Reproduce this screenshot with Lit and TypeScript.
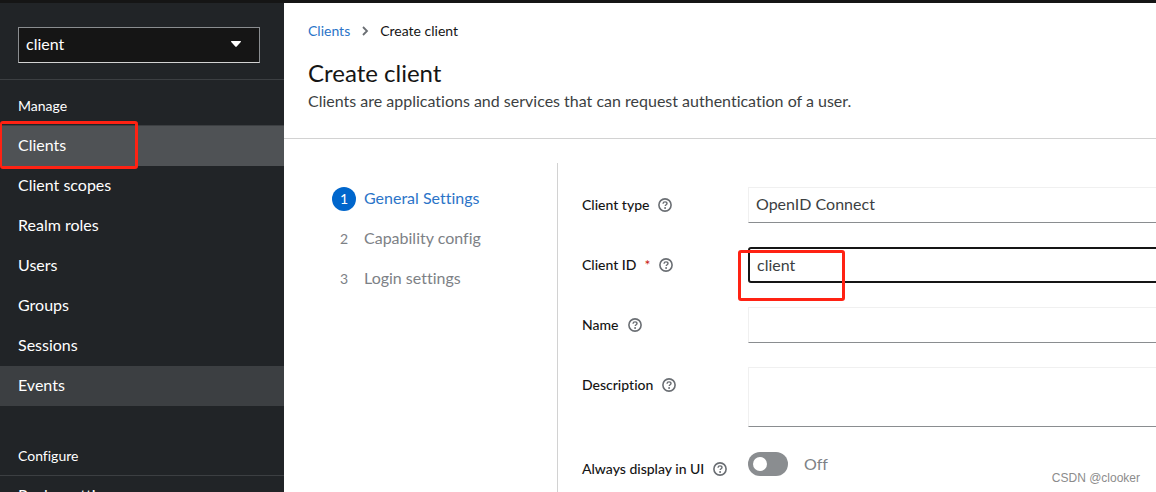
import { LitElement, html, css, svg, nothing } from "lit";
import { customElement, property } from "lit/decorators.js";

const helpIcon = svg`
  <circle cx="7" cy="7" r="6.1" fill="none" stroke="currentColor" stroke-width="1.6"></circle>
  <path d="M5 5.7C5.1 4.6 5.9 3.9 7 3.9s2 .7 2 1.6c0 1.3-1.8 1.3-1.8 2.6" fill="none" stroke="currentColor" stroke-width="1.4"></path>
  <circle cx="7.1" cy="10" r="0.95" fill="currentColor"></circle>`;

@customElement("side-nav")
class SideNav extends LitElement {
  static styles = css`
    :host { display: block; background: #212427; color: #fff; }
    .realm { padding: 24px 24px 16px 18px; border-bottom: 1px solid #3c3f42; }
    .selector {
      display: flex; align-items: center; justify-content: space-between;
      box-sizing: border-box; width: 100%; height: 36px; padding: 0 18px 2px 7px;
      border: 1px solid #8a8d90; border-bottom-color: #d2d2d2; border-radius: 0;
      background: #151515; color: #fff; font: inherit;
    }
    .group { margin-bottom: 24px; }
    .title {
      margin: 0; padding: 15px 18px 9px; border-bottom: 1px solid #3c3f42;
      font-size: 14px; line-height: 21px; font-weight: 400;
    }
    .list { list-style: none; margin: 0; padding: 0; }
    .item { position: relative; }
    .link { display: block; padding: 7px 18px 9px; line-height: 24px; color: #fff; text-decoration: none; }
    .current { background: #4f5255; }
    .hover { background: #3c3f42; }
    .mark {
      position: absolute; left: 0; top: -5px; width: 138px; height: 48px;
      box-sizing: border-box; border: 3px solid #ff2213; border-left-width: 2px; border-radius: 3px; pointer-events: none;
    }
  `;

  private item(label: string, state = "") {
    return html`<li class="item">
      <a class="link ${state}" href="#" aria-current=${state === "current" ? "page" : nothing}>${label}</a>
      ${state === "current" ? html`<span class="mark"></span>` : nothing}
    </li>`;
  }

  render() {
    return html`
      <div class="realm">
        <button class="selector" type="button" aria-haspopup="listbox">
          <span>client</span>
          <svg width="10" height="6" viewBox="0 0 10 6" aria-hidden="true"><path d="M.6 0h8.8c.6 0 .8.7.4 1.1L5.7 5.6a1 1 0 0 1-1.4 0L.2 1.1C-.2.7 0 0 .6 0z" fill="#fff"></path></svg>
        </button>
      </div>
      <nav>
        <section class="group">
          <h2 class="title">Manage</h2>
          <ul class="list">
            ${this.item("Clients", "current")}
            ${["Client scopes", "Realm roles", "Users", "Groups", "Sessions"].map((l) => this.item(l))}
            ${this.item("Events", "hover")}
          </ul>
        </section>
        <section class="group">
          <h2 class="title">Configure</h2>
          <ul class="list">${this.item("Realm settings")}</ul>
        </section>
      </nav>`;
  }
}

@customElement("form-row")
class FormRow extends LitElement {
  @property() label = "";
  @property() field = "";
  @property() kind = "text";
  @property() value = "";
  @property({ type: Boolean }) required = false;
  @property({ type: Boolean }) active = false;

  static styles = css`
    :host { display: grid; grid-template-columns: 166px minmax(0, 1fr); align-items: start; }
    .head { display: flex; align-items: center; padding-top: 7px; font-size: 14px; line-height: 22px; font-weight: 500; white-space: nowrap; }
    .star { margin-left: 8px; color: #c9190b; font-weight: 400; }
    .help { display: flex; margin-left: 9px; padding: 0; border: 0; background: none; color: #6a6e73; }
    .body { position: relative; display: flex; align-items: center; }
    .toggle { padding-top: 1px; }
    .control {
      display: block; box-sizing: border-box; width: 100%; height: 36px; margin: 0; padding: 0 8px 2px;
      border: 1px solid #f0f0f0; border-bottom-color: #8a8d90; border-radius: 0; outline: none;
      background: #fff; color: #3c3f42; font: inherit; appearance: none; resize: none;
    }
    select.control { padding: 0 7px 2px; }
    .tall { height: 60px; }
    .active { border: 2px solid #151515; border-radius: 3px; padding: 0 7px 2px; }
    .mark {
      position: absolute; left: -10px; top: 3px; width: 107px; height: 51px; box-sizing: border-box;
      border: 3px solid #ff2213; border-radius: 3px; pointer-events: none;
    }
    .switch {
      appearance: none; display: flex; align-items: center; box-sizing: border-box;
      width: 40px; height: 24px; margin: 0; padding: 0 5px; border-radius: 12px; background: #8a8d90;
    }
    .switch::before { content: ""; width: 14px; height: 14px; border-radius: 50%; background: #fff; }
    .switch:checked { background: #06c; justify-content: flex-end; }
    .state { margin-left: 16px; line-height: 24px; color: #7d8186; }
  `;

  private control() {
    switch (this.kind) {
      case "select":
        return html`<select id=${this.field} class="control"><option>${this.value}</option></select>`;
      case "area":
        return html`<textarea id=${this.field} class="control tall"></textarea>`;
      case "switch":
        return html`<input id=${this.field} class="switch" type="checkbox" role="switch"><span class="state">Off</span>`;
      default:
        return html`<input id=${this.field} class="control ${this.active ? "active" : ""}" type="text" .value=${this.value}>`;
    }
  }

  render() {
    return html`
      <div class="head">
        <label for=${this.field}>${this.label}</label>
        ${this.required ? html`<span class="star" aria-hidden="true">*</span>` : nothing}
        <button class="help" type="button" aria-label="Help"><svg width="14" height="14" viewBox="0 0 14 14">${helpIcon}</svg></button>
      </div>
      <div class="body ${this.kind === "switch" ? "toggle" : ""}">${this.control()}${this.active ? html`<span class="mark"></span>` : nothing}</div>`;
  }
}

@customElement("app-root")
class AppRoot extends LitElement {
  static styles = css`
    :host {
      position: relative; display: grid; grid-template-columns: 284px minmax(0, 1fr);
      box-sizing: border-box; height: 100vh; overflow: hidden; border-top: 3px solid #151515;
      background: #fff; color: #151515; font: 400 16px/24px "Lato", "Open Sans", sans-serif;
      font-variant-ligatures: none;
    }
    .main { display: flex; flex-direction: column; overflow: hidden; }
    .header { padding: 17px 24px 25px; border-bottom: 1px solid #d2d2d2; }
    .crumbs { display: flex; align-items: center; gap: 11px; font-size: 14px; line-height: 21px; }
    .crumb { color: #2b74c8; text-decoration: none; }
    .title { margin: 16px 0 0; font-size: 24px; line-height: 32px; font-weight: 400; }
    .lead { margin: 0; color: #3c3f42; }
    .wizard { display: grid; flex: 1; grid-template-columns: 250px minmax(0, 1fr); margin: 24px 0 0 24px; }
    .steps { list-style: none; box-sizing: border-box; margin: 0; padding: 24px 24px 0; border-right: 1px solid #d2d2d2; }
    .step { margin-bottom: 16px; }
    .go { display: flex; align-items: center; gap: 8px; padding: 0; border: 0; background: none; color: #7d8186; font: inherit; }
    .text { line-height: 22px; padding-bottom: 2px; }
    .num { width: 24px; height: 24px; border-radius: 50%; font-size: 14px; }
    .now { color: #2b74c8; }
    .now .num { background: #06c; color: #fff; }
    .form { display: flex; flex-direction: column; gap: 24px; margin-right: -24px; padding: 24px 0 0 24px; }
    .credit { position: absolute; right: 16px; bottom: 5px; font: 12px/18px "Liberation Sans", sans-serif; color: #8c8c8c; }
  `;

  render() {
    const steps = ["General Settings", "Capability config", "Login settings"];
    return html`
      <side-nav></side-nav>
      <main class="main">
        <header class="header">
          <nav class="crumbs" aria-label="Breadcrumb">
            <a class="crumb" href="#">Clients</a>
            <svg width="8" height="10" viewBox="0 0 8 10" aria-hidden="true"><path d="M2 1l4 4-4 4" fill="none" stroke="#6a6e73" stroke-width="1.8"></path></svg>
            <span>Create client</span>
          </nav>
          <h1 class="title">Create client</h1>
          <p class="lead">Clients are applications and services that can request authentication of a user.</p>
        </header>
        <div class="wizard">
          <ol class="steps">
            ${steps.map((s, i) => html`<li class="step">
              <button class="go ${i === 0 ? "now" : ""}" type="button"><span class="num">${i + 1}</span><span class="text">${s}</span></button>
            </li>`)}
          </ol>
          <form class="form">
            <form-row label="Client type" field="type" kind="select" value="OpenID Connect"></form-row>
            <form-row label="Client ID" field="id" value="client" required active></form-row>
            <form-row label="Name" field="name"></form-row>
            <form-row label="Description" field="description" kind="area"></form-row>
            <form-row label="Always display in UI" field="display" kind="switch"></form-row>
          </form>
        </div>
      </main>
      <span class="credit">CSDN @clooker</span>`;
  }
}
